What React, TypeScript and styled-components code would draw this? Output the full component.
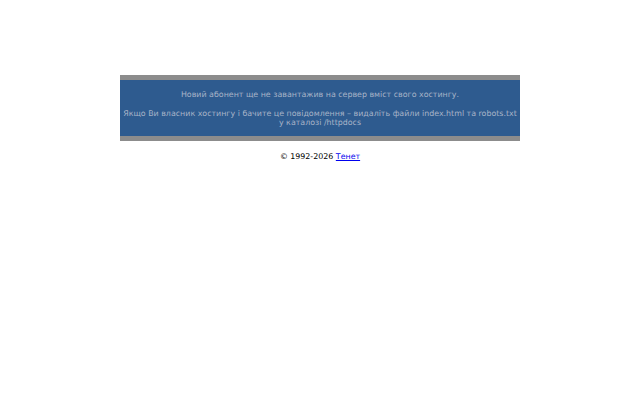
import styled, { createGlobalStyle } from "styled-components";

const GlobalStyle = createGlobalStyle`
  html, body {
    margin: 0;
    padding: 0;
    background: #ffffff;
  }
  body {
    font-family: "DejaVu Sans", Verdana, sans-serif;
  }
`;

const Page = styled.div`
  display: flex;
  flex-direction: column;
  align-items: center;
  padding-top: 75px;
`;

const Notice = styled.div`
  width: 400px;
  box-sizing: border-box;
  background: #2e5b8f;
  border-top: 5px solid #8c8c8c;
  border-bottom: 5px solid #8c8c8c;
  padding: 10px 0 9px;
  text-align: center;
  color: #a8b4c8;
  font-size: 7.9px;
  line-height: 9px;
`;

const Line = styled.p`
  margin: 0;
  & + & {
    margin-top: 10px;
  }
`;

const Footer = styled.div`
  margin-top: 11px;
  font-size: 7.9px;
  line-height: 10px;
  color: #000000;

  a {
    color: #0000ee;
  }
`;

export default function App() {
  return (
    <>
      <GlobalStyle />
      <Page>
        <Notice>
          <Line>Новий абонент ще не завантажив на сервер вміст свого хостингу.</Line>
          <Line>
            Якщо Ви власник хостингу і бачите це повідомлення – видаліть файли index.html та robots.txt
            <br />у каталозі /httpdocs
          </Line>
        </Notice>
        <Footer>
          © 1992-2026 <a href="#">Тенет</a>
        </Footer>
      </Page>
    </>
  );
}
